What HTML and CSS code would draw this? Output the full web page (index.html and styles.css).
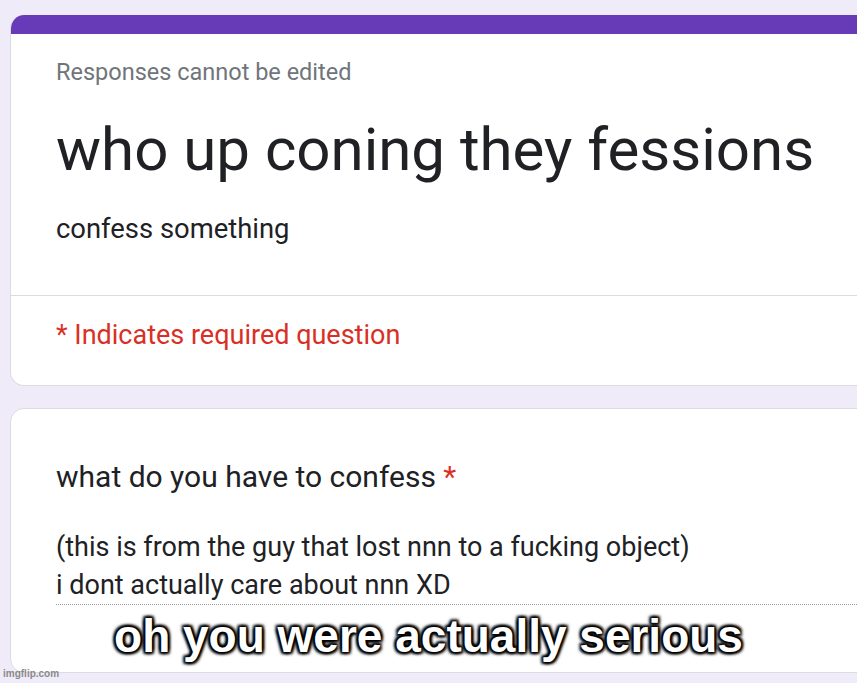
FILE: index.html
```html
<!DOCTYPE html>
<html>
<head>
<meta charset="utf-8">
<link rel="stylesheet" href="styles.css">
</head>
<body>
<div class="page">
  <div class="card header-card">
    <div class="accent"></div>
    <div class="header-body">
      <div class="notice">Responses cannot be edited</div>
      <h1 class="title">who up coning they fessions</h1>
      <div class="desc">confess something</div>
    </div>
    <div class="required-row">
      <span class="required">* Indicates required question</span>
    </div>
  </div>
  <div class="card question-card">
    <div class="question">what do you have to confess <span class="star">*</span></div>
    <div class="answer">
      <div class="answer-line">(this is from the guy that lost nnn to a fucking object)</div>
      <div class="answer-line">i dont actually care about nnn XD</div>
    </div>
  </div>
</div>
<div class="caption">oh you were actually serious</div>
<div class="watermark">imgflip.com</div>
</body>
</html>
```
FILE: styles.css
```css
html, body {
  margin: 0;
  padding: 0;
  background: #efebf8;
  overflow: hidden;
  width: 857px;
  height: 683px;
}
body {
  font-family: Roboto, "Liberation Sans", sans-serif;
  position: relative;
}
.page {
  padding: 15px 0 0 10px;
  display: flex;
  flex-direction: column;
  gap: 22px;
  width: 920px;
}
.card {
  background: #fff;
  border: 1px solid #dadce0;
  border-radius: 14px;
  overflow: hidden;
}
.header-card {
  border-top: none;
}
.accent {
  height: 19px;
  background: #673ab7;
  margin: 0 -1px;
}
.header-body {
  padding: 23px 0 48px 45px;
}
.notice {
  color: #70757a;
  font-size: 23.5px;
  line-height: 30px;
}
.title {
  margin: 27px 0 0;
  font-weight: 400;
  font-size: 60px;
  line-height: 72px;
  color: #202124;
}
.desc {
  margin-top: 25px;
  font-size: 27.4px;
  line-height: 36px;
  color: #202124;
}
.required-row {
  border-top: 1px solid #dadce0;
  padding: 21px 0 32px 45px;
}
.required {
  color: #d93025;
  font-size: 27px;
  line-height: 36px;
}
.question-card {
  height: 265px;
  padding: 48px 0 0 45px;
  box-sizing: border-box;
}
.question {
  font-size: 30px;
  line-height: 40px;
  color: #202124;
}
.star {
  color: #d93025;
}
.answer {
  margin-top: 31px;
  border-bottom: 1px dotted #9e9e9e;
  padding-bottom: 0;
}
.answer-line {
  font-size: 27px;
  line-height: 38px;
  color: #202124;
}
.caption {
  position: absolute;
  left: 0;
  width: 857px;
  top: 610px;
  line-height: 52px;
  text-align: center;
  font-family: "Liberation Sans", Arial, sans-serif;
  font-weight: 700;
  font-size: 46px;
  color: #fff;
  text-shadow: 0 0 3px #000, 0 0 3px #000, 2px 2px 3px #000, -2px -2px 3px #000, 2px -2px 3px #000, -2px 2px 3px #000;
}
.watermark {
  position: absolute;
  left: 3px;
  top: 668px;
  font-family: "Liberation Sans", Arial, sans-serif;
  font-weight: 700;
  font-size: 10px;
  color: #8a8a8a;
}
```
